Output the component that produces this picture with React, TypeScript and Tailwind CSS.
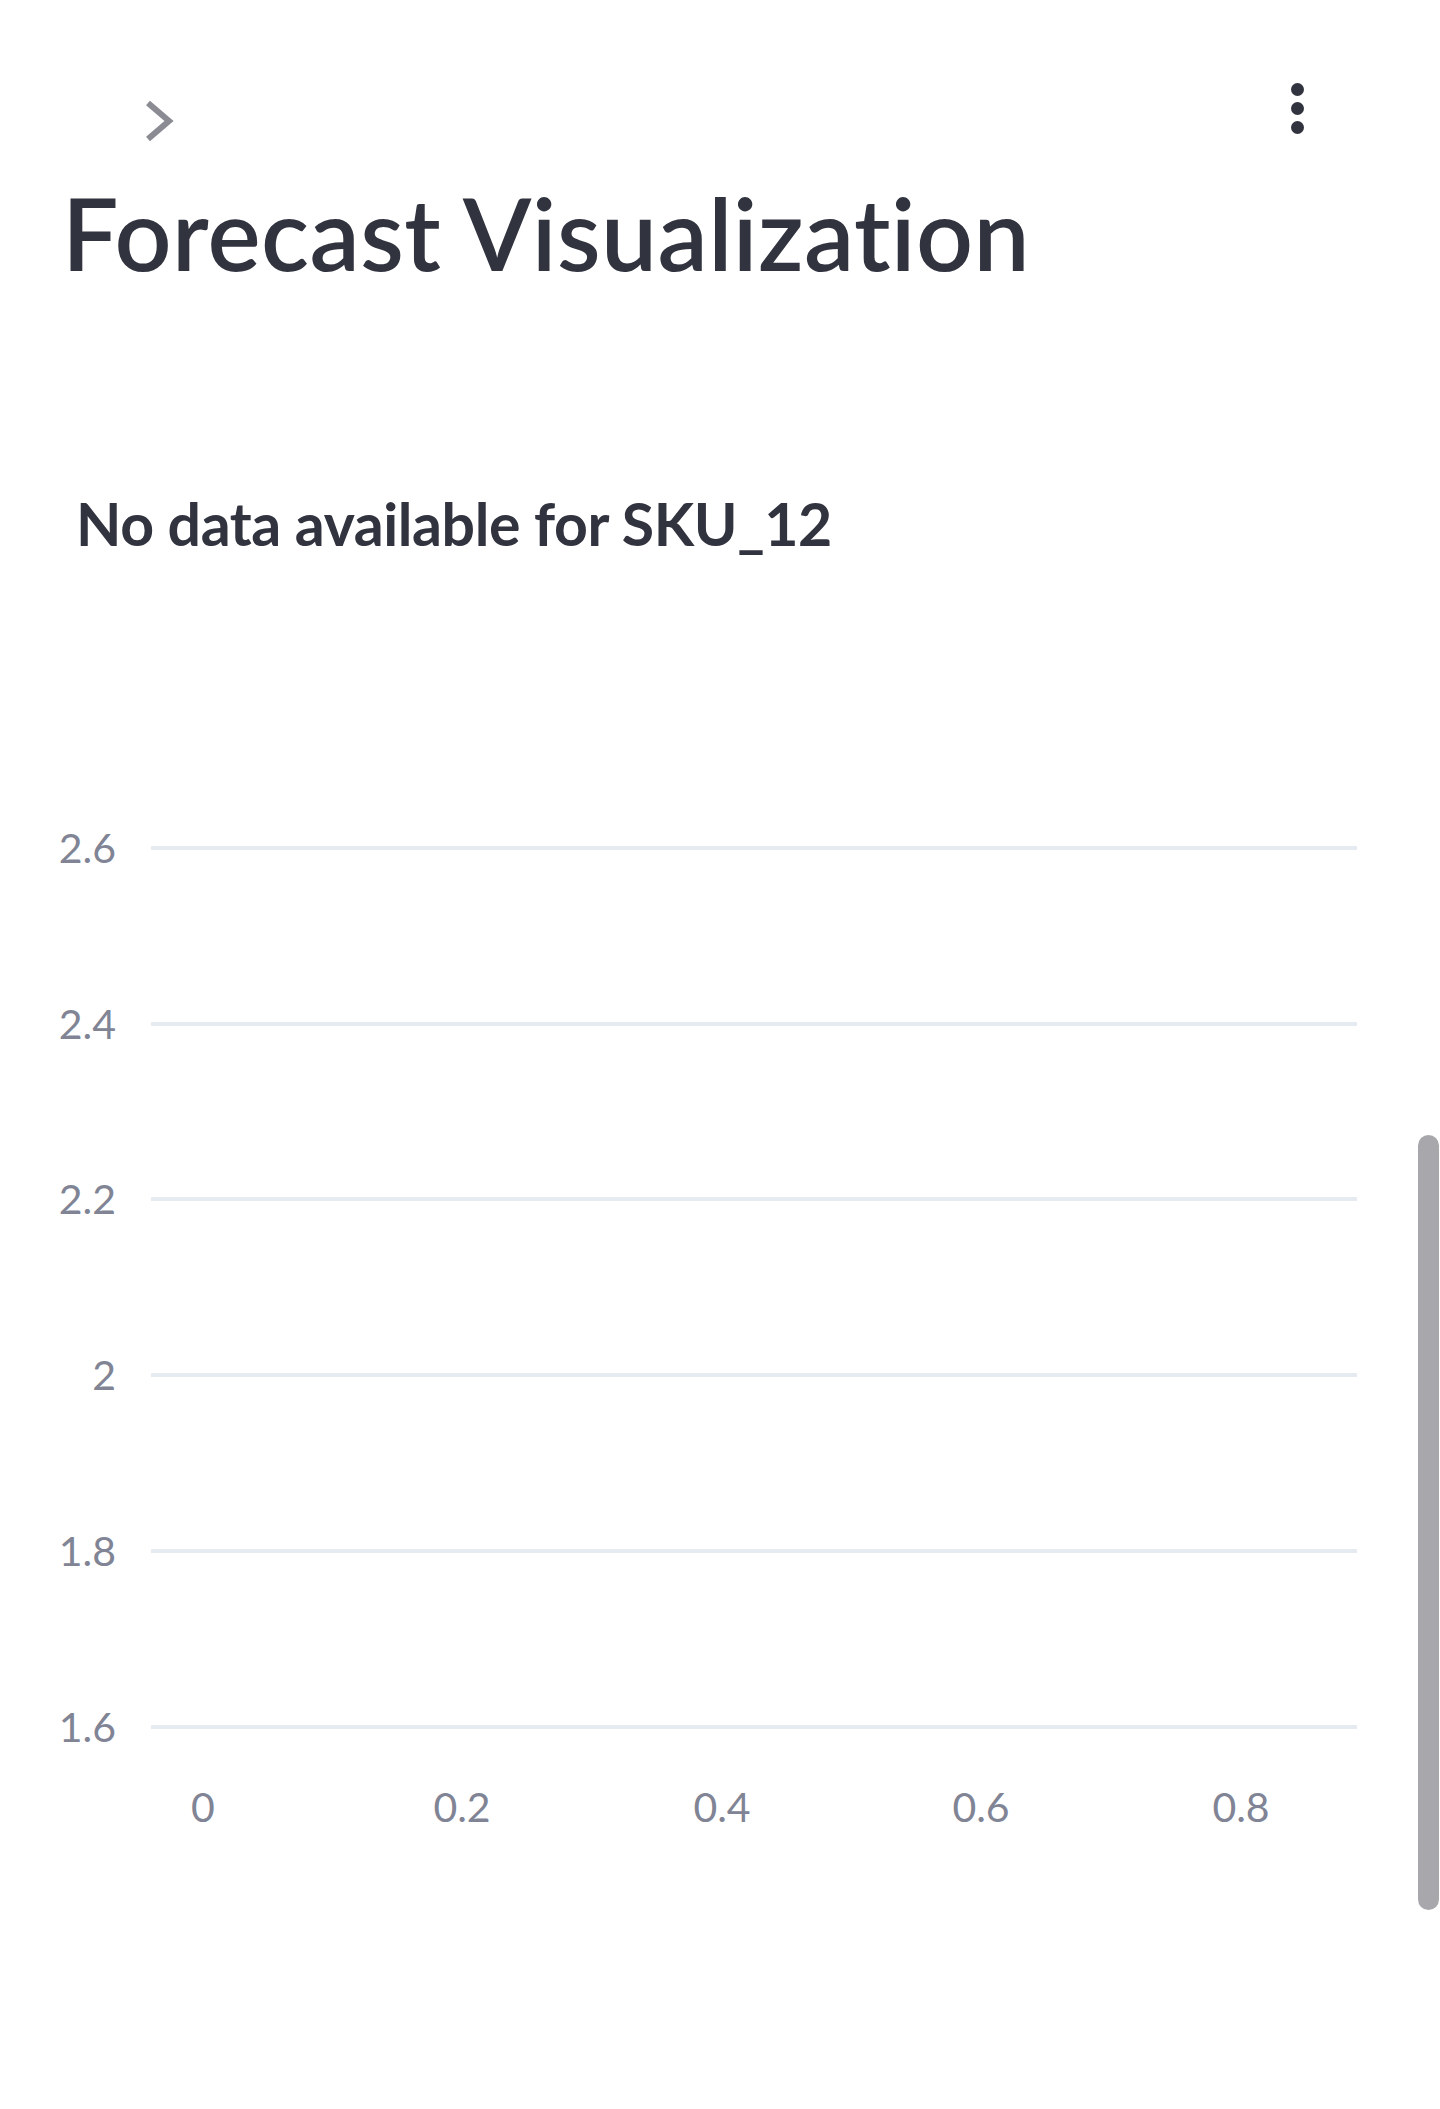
import React from 'react';

const yTicks = [
  { label: '2.6', y: 66 },
  { label: '2.4', y: 242 },
  { label: '2.2', y: 417 },
  { label: '2', y: 593 },
  { label: '1.8', y: 769 },
  { label: '1.6', y: 945 },
];

const xTicks = [
  { label: '0', x: 203 },
  { label: '0.2', x: 462 },
  { label: '0.4', x: 722 },
  { label: '0.6', x: 981 },
  { label: '0.8', x: 1241 },
];

const EmptyChart: React.FC = () => (
  <svg width={1440} height={1080} viewBox="0 0 1440 1080" className="block">
    {yTicks.map((t) => (
      <g key={t.label}>
        <line x1={151} x2={1357} y1={t.y} y2={t.y} stroke="#e6eaf1" strokeWidth={4} />
        <text
          x={116}
          y={t.y - 1}
          textAnchor="end"
          dominantBaseline="central"
          fill="#808495"
          fontSize={41}
          fontFamily="Lato, 'Noto Sans', sans-serif"
        >
          {t.label}
        </text>
      </g>
    ))}
    {xTicks.map((t) => (
      <text
        key={t.label}
        x={t.x}
        y={1024}
        textAnchor="middle"
        dominantBaseline="central"
        fill="#808495"
        fontSize={41}
        fontFamily="Lato, 'Noto Sans', sans-serif"
      >
        {t.label}
      </text>
    ))}
  </svg>
);

const App: React.FC = () => {
  return (
    <div className="relative min-h-[2109px] bg-white text-[#31333f] font-['Lato','Noto_Sans',sans-serif] overflow-hidden">
      <div className="flex items-start justify-between pt-[83px] pl-[144px] pr-[136px]">
        <svg width={30} height={42} viewBox="0 0 30 42" className="mt-[17px]">
          <polyline points="4,3 25,21 4,39" fill="none" stroke="#8b8c93" strokeWidth={6} />
        </svg>
        <div className="flex flex-col items-center gap-[6px]">
          <span className="block w-[13px] h-[13px] rounded-full bg-[#31333f]" />
          <span className="block w-[13px] h-[13px] rounded-full bg-[#31333f]" />
          <span className="block w-[13px] h-[13px] rounded-full bg-[#31333f]" />
        </div>
      </div>

      <h1 className="pl-[62px] mt-[40px] text-[100px] leading-none font-semibold tracking-[0.4px]">
        Forecast Visualization
      </h1>

      <h2 className="pl-[76px] mt-[212px] text-[59px] leading-none font-bold tracking-[-0.4px]">
        No data available for SKU_12
      </h2>

      <div className="mt-[229px]">
        <EmptyChart />
      </div>

      <div className="absolute right-[1px] top-[1135px] w-[21px] h-[775px] rounded-full bg-[#a8a8ac]" />
    </div>
  );
};

export default App;
